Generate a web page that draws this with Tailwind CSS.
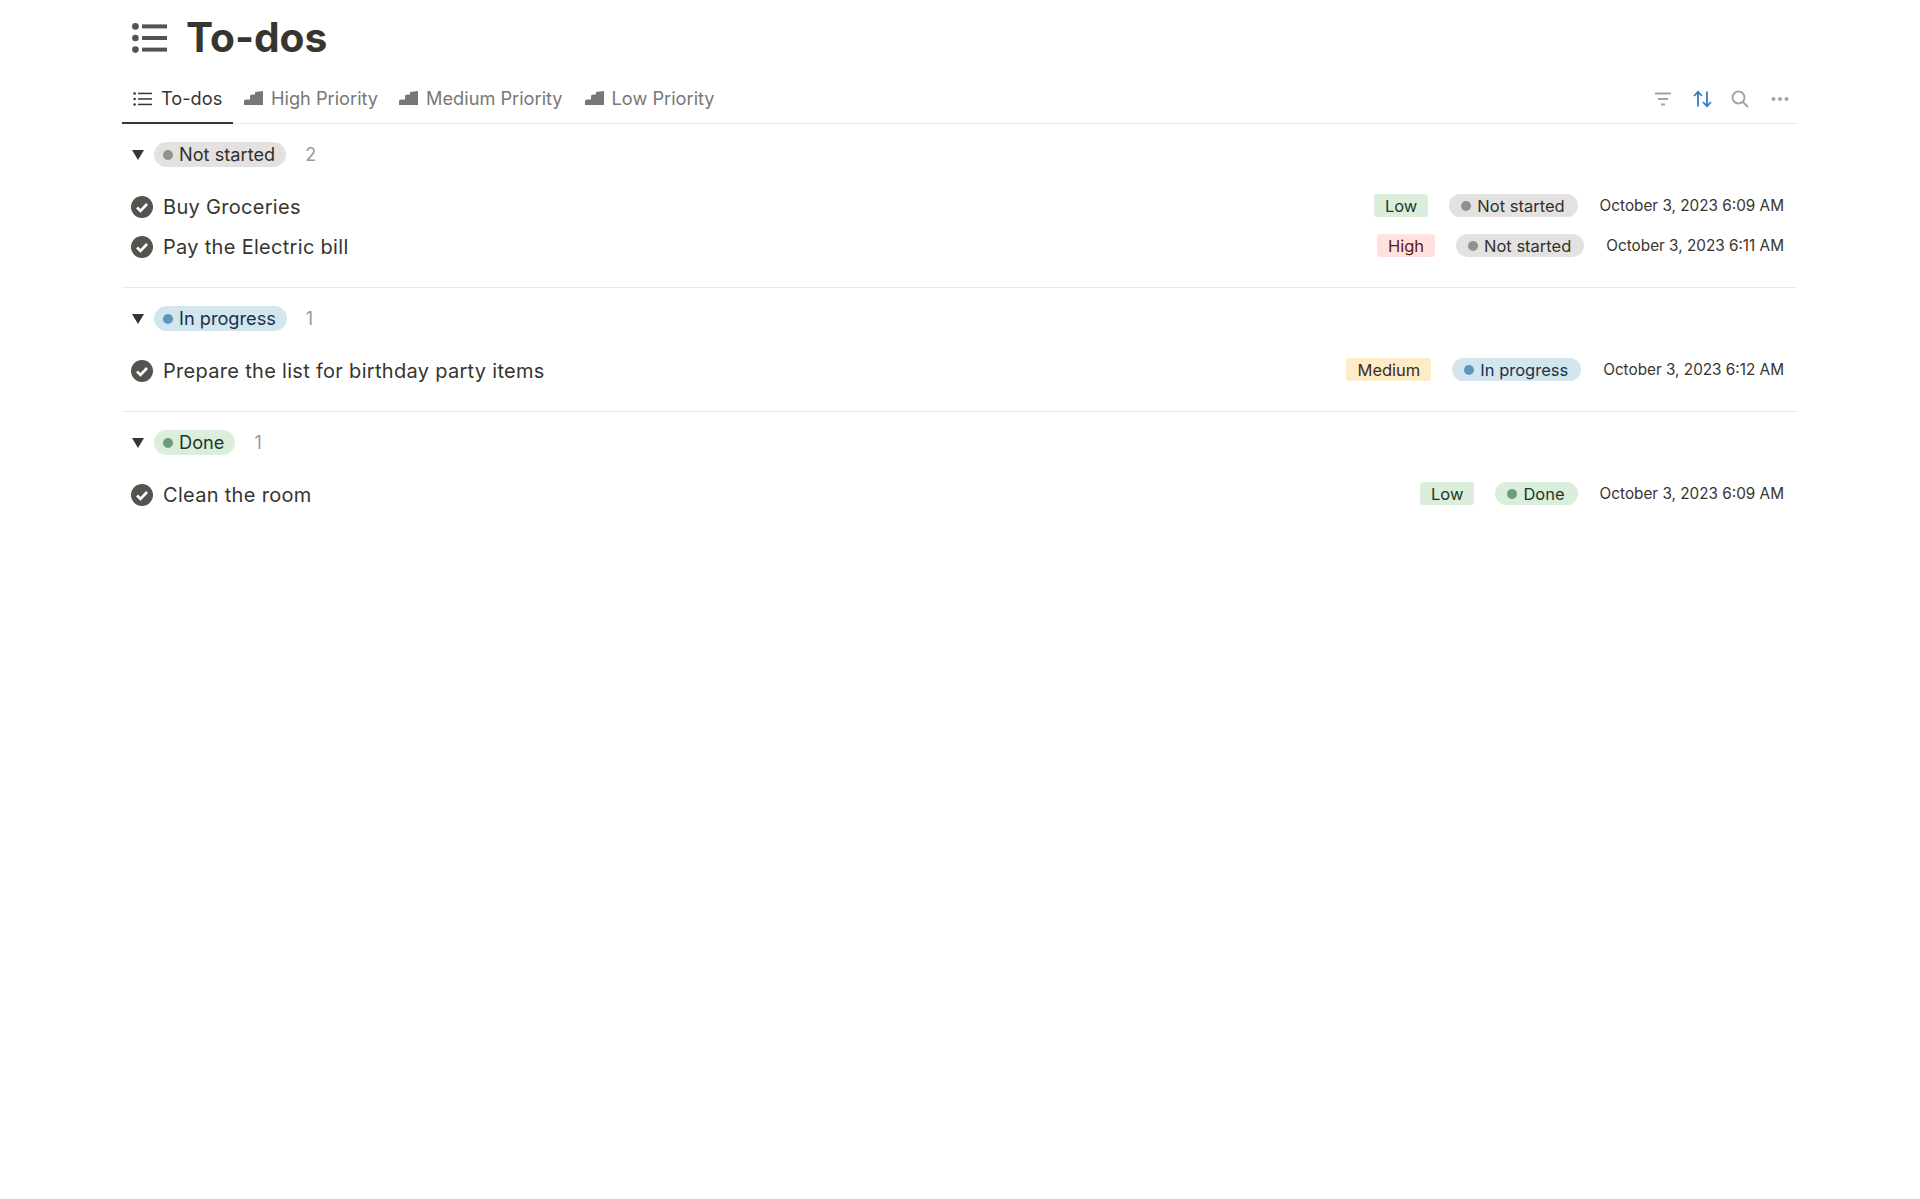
<!DOCTYPE html>
<html lang="en">

<head>
    <meta charset="UTF-8">
    <title>To-dos</title>
    <script src="https://cdn.jsdelivr.net/npm/@tailwindcss/browser@4"></script>
</head>

<body class="bg-white font-['Inter',sans-serif] text-[#37352f]">

    <main class="ml-[122px] w-[1675px]">

        <!-- Title -->
        <div class="flex items-center h-[74px] pt-[2px] pl-[10px] gap-[18px]">
            <svg class="w-[36px] h-[30px] text-[#55534e]" viewBox="0 0 36 30" fill="currentColor">
                <circle cx="3.4" cy="3.4" r="3.3"/><circle cx="3.4" cy="15" r="3.3"/><circle cx="3.4" cy="26.6" r="3.3"/>
                <rect x="10" y="1.4" width="25" height="4"/><rect x="10" y="13" width="25" height="4"/><rect x="10" y="24.6" width="25" height="4"/>
            </svg>
            <h1 class="text-[40.7px] leading-none font-bold">To-dos</h1>
        </div>

        <!-- Tabs -->
        <div class="flex items-center h-[50px] border-b border-[#e9e9e7] text-[18.2px]">
            <div class="flex items-center h-[50px] w-[111px] pt-[2px] pl-[11px] gap-[9px] border-b-2 border-[#37352f] text-[#37352f]">
                <svg class="w-[19px] h-[16px]" viewBox="0 0 19 16" fill="currentColor">
                    <circle cx="1.6" cy="2.5" r="1.3"/><circle cx="1.6" cy="8" r="1.3"/><circle cx="1.6" cy="13.5" r="1.3"/>
                    <rect x="5" y="1.7" width="14" height="1.5"/><rect x="5" y="7.2" width="14" height="1.5"/><rect x="5" y="12.7" width="14" height="1.5"/>
                </svg>
                <span>To-dos</span>
            </div>
            <div class="flex items-center ml-[11px] gap-[8px] text-[#787774]">
                <svg class="w-[19px] h-[16px]" viewBox="0 0 19 16" fill="currentColor"><path d="M0 15V10.5L2 9.5H6V5.5L8 4.5H11V2L19 1V15Z"/></svg>
                <span>High Priority</span>
            </div>
            <div class="flex items-center ml-[21px] gap-[8px] text-[#787774]">
                <svg class="w-[19px] h-[16px]" viewBox="0 0 19 16" fill="currentColor"><path d="M0 15V10.5L2 9.5H6V5.5L8 4.5H11V2L19 1V15Z"/></svg>
                <span>Medium Priority</span>
            </div>
            <div class="flex items-center ml-[22px] gap-[8px] text-[#787774]">
                <svg class="w-[19px] h-[16px]" viewBox="0 0 19 16" fill="currentColor"><path d="M0 15V10.5L2 9.5H6V5.5L8 4.5H11V2L19 1V15Z"/></svg>
                <span>Low Priority</span>
            </div>
            <div class="flex items-center ml-auto pr-[8px]">
                <svg class="w-[18px] h-[18px] text-[#a5a4a1]" viewBox="0 0 18 18" fill="none" stroke="currentColor" stroke-width="1.8"><path d="M1 3.5H17M4 9H14M7 14.5H11"/></svg>
                <svg class="ml-[21px] w-[19px] h-[18px] text-[#2f7fc4]" viewBox="0 0 19 18" fill="none" stroke="currentColor" stroke-width="1.8"><path d="M5 16.5V2M1 6L5 1.8L9 6M14 1.5V16M10 12L14 16.2L18 12"/></svg>
                <svg class="ml-[19px] w-[18px] h-[18px] text-[#a5a4a1]" viewBox="0 0 18 18" fill="none" stroke="currentColor" stroke-width="2"><circle cx="7.5" cy="7.5" r="6"/><path d="M12 12L17 17"/></svg>
                <svg class="ml-[22px] w-[18px] h-[18px] text-[#a5a4a1]" viewBox="0 0 18 18" fill="currentColor"><circle cx="2.5" cy="9" r="2"/><circle cx="9" cy="9" r="2"/><circle cx="15.5" cy="9" r="2"/></svg>
            </div>
        </div>

        <!-- Not started -->
        <section class="border-b border-[#e9e9e7] pt-[18px] pb-[20px]">
            <div class="flex items-center h-[25px] pl-[10px]">
                <svg class="mt-[1px] w-[12px] h-[10px] text-[#37352f]" viewBox="0 0 12 10" fill="currentColor"><path d="M0 0H12L6 10Z"/></svg>
                <span class="ml-[10px] flex items-center h-[25px] rounded-full bg-[#e3e2e0] pl-[9px] pr-[11px] gap-[6px] text-[18.2px] text-[#32302c]"><i class="w-[10px] h-[10px] rounded-full bg-[#91918e]"></i>Not started</span>
                <span class="ml-[19px] text-[18px] text-[#9b9a97]">2</span>
            </div>
            <div class="mt-[20px]">
                <div class="flex items-center h-[40px] pl-[9px] pr-[13px]">
                    <svg class="w-[22px] h-[22px] text-[#55534e]" viewBox="0 0 22 22"><circle cx="11" cy="11" r="11" fill="currentColor"/><path d="M6 11.5L9.5 15L16 8" fill="none" stroke="#fff" stroke-width="2.6"/></svg>
                    <span class="ml-[10px] text-[20px] tracking-[0.3px]">Buy Groceries</span>
                    <span class="ml-auto mb-[3px] flex items-center h-[23px] pt-[2px] rounded-[3px] bg-[#dbeddb] px-[11px] text-[16.5px] text-[#1c3829]">Low</span>
                    <span class="ml-[21px] mb-[3px] flex items-center h-[23px] pt-[2px] rounded-full bg-[#e3e2e0] pl-[12px] pr-[13px] gap-[6px] text-[16.5px] text-[#32302c]"><i class="w-[10px] h-[10px] -mt-[2px] rounded-full bg-[#91918e]"></i>Not started</span>
                    <span class="ml-[22px] mb-[2px] text-[15.3px] text-[#37352f]">October 3, 2023 6:09 AM</span>
                </div>
                <div class="flex items-center h-[40px] pl-[9px] pr-[13px]">
                    <svg class="w-[22px] h-[22px] text-[#55534e]" viewBox="0 0 22 22"><circle cx="11" cy="11" r="11" fill="currentColor"/><path d="M6 11.5L9.5 15L16 8" fill="none" stroke="#fff" stroke-width="2.6"/></svg>
                    <span class="ml-[10px] text-[20px] tracking-[0.3px]">Pay the Electric bill</span>
                    <span class="ml-auto mb-[3px] flex items-center h-[23px] pt-[2px] rounded-[3px] bg-[#ffe2dd] px-[11px] text-[16.5px] text-[#5d1715]">High</span>
                    <span class="ml-[21px] mb-[3px] flex items-center h-[23px] pt-[2px] rounded-full bg-[#e3e2e0] pl-[12px] pr-[13px] gap-[6px] text-[16.5px] text-[#32302c]"><i class="w-[10px] h-[10px] -mt-[2px] rounded-full bg-[#91918e]"></i>Not started</span>
                    <span class="ml-[22px] mb-[2px] text-[15.3px] text-[#37352f]">October 3, 2023 6:11 AM</span>
                </div>
            </div>
        </section>

        <!-- In progress -->
        <section class="border-b border-[#e9e9e7] pt-[18px] pb-[20px]">
            <div class="flex items-center h-[25px] pl-[10px]">
                <svg class="mt-[1px] w-[12px] h-[10px] text-[#37352f]" viewBox="0 0 12 10" fill="currentColor"><path d="M0 0H12L6 10Z"/></svg>
                <span class="ml-[10px] flex items-center h-[25px] rounded-full bg-[#d3e5ef] pl-[9px] pr-[11px] gap-[6px] text-[18.2px] text-[#183347]"><i class="w-[10px] h-[10px] rounded-full bg-[#5b97bd]"></i>In progress</span>
                <span class="ml-[19px] text-[18px] text-[#9b9a97]">1</span>
            </div>
            <div class="mt-[20px]">
                <div class="flex items-center h-[40px] pl-[9px] pr-[13px]">
                    <svg class="w-[22px] h-[22px] text-[#55534e]" viewBox="0 0 22 22"><circle cx="11" cy="11" r="11" fill="currentColor"/><path d="M6 11.5L9.5 15L16 8" fill="none" stroke="#fff" stroke-width="2.6"/></svg>
                    <span class="ml-[10px] text-[20px] tracking-[0.3px]">Prepare the list for birthday party items</span>
                    <span class="ml-auto mb-[3px] flex items-center h-[23px] pt-[2px] rounded-[3px] bg-[#fdecc8] px-[11px] text-[16.5px] text-[#402c1b]">Medium</span>
                    <span class="ml-[21px] mb-[3px] flex items-center h-[23px] pt-[2px] rounded-full bg-[#d3e5ef] pl-[12px] pr-[13px] gap-[6px] text-[16.5px] text-[#183347]"><i class="w-[10px] h-[10px] -mt-[2px] rounded-full bg-[#5b97bd]"></i>In progress</span>
                    <span class="ml-[22px] mb-[2px] text-[15.3px] text-[#37352f]">October 3, 2023 6:12 AM</span>
                </div>
            </div>
        </section>

        <!-- Done -->
        <section class="pt-[18px] pb-[20px]">
            <div class="flex items-center h-[25px] pl-[10px]">
                <svg class="mt-[1px] w-[12px] h-[10px] text-[#37352f]" viewBox="0 0 12 10" fill="currentColor"><path d="M0 0H12L6 10Z"/></svg>
                <span class="ml-[10px] flex items-center h-[25px] rounded-full bg-[#dbeddb] pl-[9px] pr-[11px] gap-[6px] text-[18.2px] text-[#1c3829]"><i class="w-[10px] h-[10px] rounded-full bg-[#6c9b7d]"></i>Done</span>
                <span class="ml-[19px] text-[18px] text-[#9b9a97]">1</span>
            </div>
            <div class="mt-[20px]">
                <div class="flex items-center h-[40px] pl-[9px] pr-[13px]">
                    <svg class="w-[22px] h-[22px] text-[#55534e]" viewBox="0 0 22 22"><circle cx="11" cy="11" r="11" fill="currentColor"/><path d="M6 11.5L9.5 15L16 8" fill="none" stroke="#fff" stroke-width="2.6"/></svg>
                    <span class="ml-[10px] text-[20px] tracking-[0.3px]">Clean the room</span>
                    <span class="ml-auto mb-[3px] flex items-center h-[23px] pt-[2px] rounded-[3px] bg-[#dbeddb] px-[11px] text-[16.5px] text-[#1c3829]">Low</span>
                    <span class="ml-[21px] mb-[3px] flex items-center h-[23px] pt-[2px] rounded-full bg-[#dbeddb] pl-[12px] pr-[13px] gap-[6px] text-[16.5px] text-[#1c3829]"><i class="w-[10px] h-[10px] -mt-[2px] rounded-full bg-[#6c9b7d]"></i>Done</span>
                    <span class="ml-[22px] mb-[2px] text-[15.3px] text-[#37352f]">October 3, 2023 6:09 AM</span>
                </div>
            </div>
        </section>

    </main>

</body>

</html>
